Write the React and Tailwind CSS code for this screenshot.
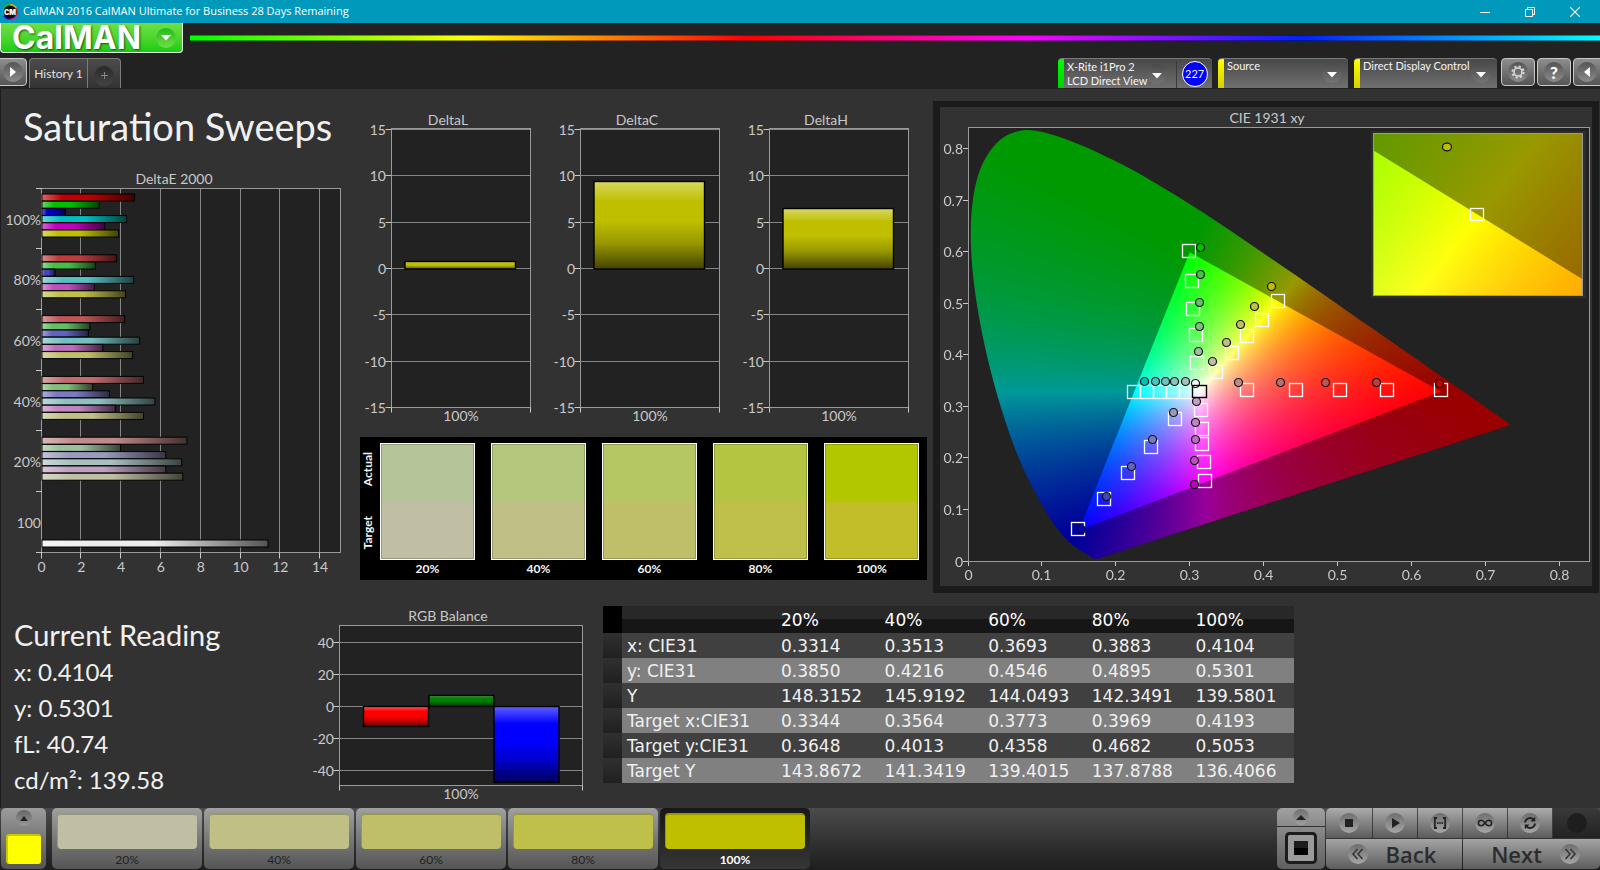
import { useLayoutEffect, useRef } from "react";

const TEXT = "#c9c9c9";
const GRID = "#858585";
const LINE = "#9a9a9a";

const PALETTE = {
  red: ["#bf0000", "#bf3c3c", "#bf5555", "#bf6c6c", "#bf8a8a"],
  green: ["#00bf00", "#46bf46", "#63bf63", "#7fbf7f", "#9dbf9d"],
  blue: ["#0000bf", "#4444bf", "#6262bf", "#7a7abf", "#9a9abf"],
  cyan: ["#00bfbf", "#56bfbf", "#74bfbf", "#90bfbf", "#a8bfbf"],
  magenta: ["#bf00bf", "#bf4fbf", "#bf6bbf", "#bf86bf", "#bfa0bf"],
  yellow: ["#bfbf00", "#bfbf4b", "#bfbf69", "#bfbf86", "#bfbfa5"],
};
const HUES = ["red", "green", "blue", "cyan", "magenta", "yellow"];

const LEVELS = ["20%", "40%", "60%", "80%", "100%"];

/* ---------- Delta E 2000 ---------- */

const DELTA_E = [
  { label: "100%", values: [4.65, 2.88, 1.17, 4.25, 3.15, 3.85] },
  { label: "80%", values: [3.75, 2.68, 0.65, 4.6, 2.63, 4.2] },
  { label: "60%", values: [4.15, 2.41, 2.33, 4.9, 3.05, 4.55] },
  { label: "40%", values: [5.1, 2.55, 3.39, 5.67, 3.68, 5.1] },
  { label: "20%", values: [7.28, 3.95, 6.22, 7.02, 6.22, 7.07] },
];

function DeltaEChart() {
  const x0 = 41.5;
  const top = 18.5;
  const bottom = 382.5;
  const unit = 19.9;
  const band = (bottom - top) / 6;
  return (
    <svg viewBox="0 0 345 410" width="345" height="410" role="img" aria-label="DeltaE 2000" fontSize="14" fill={TEXT}>
      <defs>
        <linearGradient id="shine-h">
          <stop offset="0" stopColor="#fff" stopOpacity=".4" />
          <stop offset=".22" stopColor="#fff" stopOpacity="0" />
          <stop offset=".5" stopColor="#000" stopOpacity="0" />
          <stop offset="1" stopColor="#000" stopOpacity=".65" />
        </linearGradient>
      </defs>
      <text x="174" y="14" textAnchor="middle">DeltaE 2000</text>
      <rect x={x0} y={top} width="299" height={bottom - top} fill="#222" />
      {[2, 4, 6, 8, 10, 12, 14].map((t) => (
        <path key={t} d={`M${Math.round(x0 + t * unit) - 0.5} ${top}V${bottom}`} stroke={GRID} />
      ))}
      <rect x={x0} y={top} width="299" height={bottom - top} fill="none" stroke={LINE} />
      {[0, 2, 4, 6, 8, 10, 12, 14].map((t) => (
        <g key={t}>
          <path d={`M${Math.round(x0 + t * unit) - 0.5} ${bottom}v6`} stroke={TEXT} />
          <text x={x0 + t * unit} y="402" textAnchor="middle">{t}</text>
        </g>
      ))}
      {[0, 1, 2, 3, 4, 5, 6].map((i) => (
        <path key={i} d={`M36 ${Math.round(top + i * band) - 0.5}h6`} stroke={TEXT} />
      ))}
      {DELTA_E.map((row, r) => (
        <g key={row.label}>
          <text x="41" y={top + r * band + 36} textAnchor="end">{row.label}</text>
          {row.values.map((v, i) => (
            <g key={i}>
              <rect x="42" y={24 + r * 60.8 + i * 7.2} width={v * unit} height="7" fill={PALETTE[HUES[i]][r]} />
              <rect x="42" y={24 + r * 60.8 + i * 7.2} width={v * unit} height="7" fill="url(#shine-h)" stroke="#000" />
            </g>
          ))}
        </g>
      ))}
      <text x="41" y="358" textAnchor="end">100</text>
      <rect x="42" y="370" width="226" height="7" fill="#eee" />
      <rect x="42" y="370" width="226" height="7" fill="url(#shine-h)" stroke="#000" />
    </svg>
  );
}

/* ---------- vertical bar charts ---------- */

function BarChart({ id, title, width, height, plot, ticks, yOf, bars, labelX, titleX }) {
  const { x, y, w, h } = plot;
  return (
    <svg viewBox={`0 0 ${width} ${height}`} width={width} height={height} role="img" aria-label={title} fontSize="14" fill={TEXT}>
      <defs>
        <linearGradient id={`shine-${id}`} x1="0" y1="0" x2="0" y2="1">
          <stop offset="0" stopColor="#fff" stopOpacity=".38" />
          <stop offset=".23" stopColor="#fff" stopOpacity="0" />
          <stop offset=".45" stopColor="#000" stopOpacity="0" />
          <stop offset=".7" stopColor="#000" stopOpacity=".2" />
          <stop offset="1" stopColor="#000" stopOpacity=".65" />
        </linearGradient>
      </defs>
      <text x={titleX} y="13" textAnchor="middle">{title}</text>
      <rect x={x} y={y} width={w} height={h} fill="#222" />
      {ticks.map((t) => (
        <g key={t}>
          <path d={`M${x} ${yOf(t)}h${w}`} stroke={GRID} />
          <path d={`M${x - 6} ${yOf(t)}h6`} stroke={TEXT} />
          <text x={labelX} y={yOf(t) + 5} textAnchor="end">{t}</text>
        </g>
      ))}
      <rect x={x} y={y} width={w} height={h} fill="none" stroke={LINE} />
      <path d={`M${x} ${y + h}v5M${x + w} ${y + h}v5`} stroke={TEXT} />
      {bars.map((b) => (
        <g key={b.x}>
          <rect x={b.x} y={b.y} width={b.w} height={b.h} fill={b.fill} />
          <rect x={b.x} y={b.y} width={b.w} height={b.h} fill={`url(#shine-${id})`} stroke="#000" strokeWidth="1.4" />
        </g>
      ))}
      <text x={x + w / 2} y={y + h + 13} textAnchor="middle">100%</text>
    </svg>
  );
}

const DELTAS = [
  { title: "DeltaL", top: 149.5 },
  { title: "DeltaC", top: 69.5 },
  { title: "DeltaH", top: 96.5 },
];

function DeltaCharts() {
  return (
    <div className="flex gap-4">
      {DELTAS.map((d) => (
        <BarChart
          key={d.title}
          id={d.title}
          title={d.title}
          width={173}
          height={316}
          titleX={85}
          labelX={23}
          plot={{ x: 28.5, y: 16.5, w: 139, h: 279 }}
          ticks={[15, 10, 5, 0, -5, -10, -15]}
          yOf={(t) => (t === -15 ? 295.5 : Math.round(157 - t * 9.27) - 0.5)}
          bars={[{ x: 42, y: d.top, w: 110.5, h: 157 - d.top, fill: "#bfbf00" }]}
        />
      ))}
    </div>
  );
}

function RgbBalance() {
  return (
    <BarChart
      id="rgb"
      title="RGB Balance"
      width={290}
      height={200}
      titleX={148}
      labelX={34}
      plot={{ x: 39.5, y: 17.5, w: 243, h: 160 }}
      ticks={[40, 20, 0, -20, -40]}
      yOf={(t) => Math.round(98 - t * 1.59) + 0.5}
      bars={[
        { x: 63.5, y: 98.5, w: 65, h: 20, fill: "#ff0000" },
        { x: 129, y: 87.5, w: 65, h: 11, fill: "#008000" },
        { x: 194, y: 98.5, w: 65, h: 76, fill: "#0000ff" },
      ]}
    />
  );
}

/* ---------- swatches ---------- */

const SWATCHES = [
  ["20%", "bg-[#b5c599]", "bg-[#c0bfa4]"],
  ["40%", "bg-[#b4c77d]", "bg-[#c0bf85]"],
  ["60%", "bg-[#b4c762]", "bg-[#bfbf69]"],
  ["80%", "bg-[#b3c541]", "bg-[#bfc049]"],
  ["100%", "bg-[#b3c700]", "bg-[#c1be2a]"],
];

function SwatchPanel() {
  return (
    <div className="flex h-[143px] w-[567px] bg-black pt-[6px] text-[12px] font-bold text-[#f4f4f4]">
      <div className="flex w-5 flex-col pr-1">
        <div className="flex h-[52px] items-center justify-center [writing-mode:vertical-rl]">
          <span className="rotate-180">Actual</span>
        </div>
        <div className="mt-3 flex h-[52px] items-center justify-center [writing-mode:vertical-rl]">
          <span className="rotate-180">Target</span>
        </div>
      </div>
      <div className="flex gap-4">
        {SWATCHES.map(([label, actual, target]) => (
          <div key={label} className="w-[95px]">
            <div className="h-[117px] border border-white">
              <div className={`h-1/2 border-x border-t border-black/20 ${actual}`} />
              <div className={`h-1/2 border-x border-b border-black/20 ${target}`} />
            </div>
            <div className="text-center leading-[18px]">{label}</div>
          </div>
        ))}
      </div>
    </div>
  );
}

/* ---------- CIE 1931 ---------- */

const LOCUS = [
  [0.1741, 0.005], [0.1733, 0.0048], [0.1714, 0.0051], [0.1689, 0.0069], [0.1644, 0.0109],
  [0.1566, 0.0177], [0.144, 0.0297], [0.1355, 0.0399], [0.1241, 0.0578], [0.1096, 0.0868],
  [0.0913, 0.1327], [0.0687, 0.2007], [0.0454, 0.295], [0.0235, 0.4127], [0.0082, 0.5384],
  [0.0039, 0.6548], [0.0139, 0.7502], [0.0389, 0.812], [0.0743, 0.8365], [0.1142, 0.8282],
  [0.1547, 0.8069], [0.1929, 0.7816], [0.2296, 0.7543], [0.3016, 0.6923], [0.3731, 0.6245],
  [0.4441, 0.5547], [0.5125, 0.4866], [0.5752, 0.4242], [0.627, 0.3725], [0.6658, 0.334],
  [0.6915, 0.3083], [0.719, 0.2809], [0.7347, 0.2653],
];
const GAMUT = [[0.3, 0.6], [0.64, 0.33], [0.15, 0.06]];

const TARGETS = {
  green: [[0.2986, 0.602], [0.302, 0.544], [0.304, 0.49], [0.3072, 0.44], [0.309, 0.386]],
  yellow: [[0.4193, 0.5053], [0.3965, 0.4682], [0.3773, 0.4368], [0.3564, 0.4053], [0.3344, 0.3668]],
  cyan: [[0.2238, 0.3298], [0.2418, 0.3298], [0.2594, 0.3298], [0.2765, 0.3298], [0.2946, 0.3298]],
  blue: [[0.1484, 0.0627], [0.1836, 0.1209], [0.2161, 0.1726], [0.2472, 0.2231], [0.2788, 0.2774]],
  magenta: [[0.3194, 0.1558], [0.3185, 0.194], [0.3162, 0.2289], [0.3162, 0.2573], [0.3149, 0.2942]],
  red: [[0.6397, 0.3324], [0.5666, 0.3324], [0.503, 0.3324], [0.4434, 0.3324], [0.3762, 0.3324]],
};
const ACTUALS = {
  green: [[0.3144, 0.6092], [0.3144, 0.5555], [0.3131, 0.5018], [0.3131, 0.4553], [0.3117, 0.4067]],
  yellow: [[0.4104, 0.5321], [0.3883, 0.4935], [0.3693, 0.4586], [0.3493, 0.4236], [0.3304, 0.388]],
  cyan: [[0.2387, 0.3486], [0.2535, 0.3486], [0.2671, 0.3486], [0.2793, 0.3486], [0.2941, 0.3486]],
  blue: [[0.1539, 0.0607], [0.1872, 0.1254], [0.2211, 0.1836], [0.2495, 0.2367], [0.2779, 0.2878]],
  magenta: [[0.3063, 0.1487], [0.3063, 0.1959], [0.3077, 0.2367], [0.3077, 0.269], [0.309, 0.3091]],
  red: [[0.6387, 0.344], [0.5521, 0.346], [0.484, 0.346], [0.4222, 0.346], [0.3654, 0.346]],
};

function chromaToRgb(x, y, gain) {
  const yy = Math.max(y, 0.0001);
  const X = x / yy;
  const Z = (1 - x - yy) / yy;
  const r = Math.max(0, 3.2406 * X - 1.5372 - 0.4986 * Z);
  const g = Math.max(0, -0.9689 * X + 1.8758 + 0.0415 * Z);
  const b = Math.max(0, 0.0557 * X - 0.204 + 1.057 * Z);
  const k = (255 * gain) / Math.max(r, g, b, 1e-6);
  return [r * k, g * k, b * k];
}

function chromaLayer(w, h, view, gain) {
  const c = document.createElement("canvas");
  c.width = w;
  c.height = h;
  const ctx = c.getContext("2d");
  const img = ctx.createImageData(w, h);
  for (let j = 0; j < h; j++) {
    for (let i = 0; i < w; i++) {
      const rgb = chromaToRgb(view.x + (i + 0.5) / view.sx, view.y - (j + 0.5) / view.sy, gain);
      const k = (j * w + i) * 4;
      img.data[k] = rgb[0];
      img.data[k + 1] = rgb[1];
      img.data[k + 2] = rgb[2];
      img.data[k + 3] = 255;
    }
  }
  ctx.putImageData(img, 0, 0);
  return c;
}

function ChromaCanvas({ w, h, view, label }) {
  const ref = useRef(null);
  useLayoutEffect(() => {
    const ctx = ref.current.getContext("2d");
    ctx.clearRect(0, 0, w, h);
    const px = ([x, y]) => [(x - view.x) * view.sx, (view.y - y) * view.sy];

    ctx.save();
    ctx.beginPath();
    const p = LOCUS.map(px);
    ctx.moveTo(...p[0]);
    for (let i = 0; i < p.length - 1; i++) {
      const a = p[Math.max(i - 1, 0)];
      const b = p[i];
      const c = p[i + 1];
      const d = p[Math.min(i + 2, p.length - 1)];
      ctx.bezierCurveTo(
        b[0] + (c[0] - a[0]) / 6, b[1] + (c[1] - a[1]) / 6,
        c[0] - (d[0] - b[0]) / 6, c[1] - (d[1] - b[1]) / 6,
        c[0], c[1],
      );
    }
    ctx.closePath();
    ctx.clip();
    ctx.drawImage(chromaLayer(w, h, view, 0.6), 0, 0);
    ctx.restore();

    ctx.save();
    ctx.beginPath();
    GAMUT.map(px).forEach((q) => ctx.lineTo(...q));
    ctx.closePath();
    ctx.clip();
    ctx.drawImage(chromaLayer(w, h, view, 1), 0, 0);
    ctx.restore();
  }, [w, h, view]);
  return <canvas ref={ref} width={w} height={h} aria-label={label} className="block" />;
}

const MAIN_VIEW = { x: 0, y: 0.8411, sx: 739, sy: 515.4 };
const INSET_VIEW = { x: 0.3893, y: 0.5353, sx: 3483, sy: 2700 };

function CieChart() {
  const X = (x) => 28.5 + x * 739;
  const Y = (y) => 454.5 - y * 515.4;
  const snap = (v) => Math.round(v) - 0.5;
  return (
    <svg viewBox="0 0 652 479" className="block w-full" role="img" aria-label="CIE 1931 xy" fontSize="14" fill={TEXT}>
      <text x="327" y="16" textAnchor="middle">CIE 1931 xy</text>
      <rect x="28.5" y="20.5" width="621" height="434" fill="#222" />
      <foreignObject x="28" y="21" width="621" height="434">
        <ChromaCanvas w={621} h={434} view={MAIN_VIEW} label="Chromaticity diagram" />
      </foreignObject>
      <rect x="28.5" y="20.5" width="621" height="434" fill="none" stroke={LINE} />
      {[0, 1, 2, 3, 4, 5, 6, 7, 8].map((t) => {
        const gx = snap(X(t / 10));
        const gy = snap(Y(t / 10));
        return (
          <g key={t}>
            <path d={`M${gx} 455v4M23 ${gy}h5`} stroke={TEXT} />
            <text x={gx} y="473" textAnchor="middle">{t / 10}</text>
            <text x="23" y={gy + 5} textAnchor="end">{t / 10}</text>
          </g>
        );
      })}
      {Object.entries(TARGETS).flatMap(([hue, pts]) =>
        pts.map(([x, y]) => (
          <rect key={hue + x + y} x={snap(X(x)) - 6} y={snap(Y(y)) - 6} width="13" height="13" fill="none" stroke="#fff" strokeWidth="1.3" />
        )),
      )}
      {Object.entries(ACTUALS).flatMap(([hue, pts]) =>
        pts.map(([x, y], i) => (
          <circle key={hue + x + y} cx={snap(X(x))} cy={snap(Y(y))} r="4" fill={PALETTE[hue][i]} stroke="#111" strokeWidth="1.2" />
        )),
      )}
      <circle cx={snap(X(0.3072))} cy={snap(Y(0.3453))} r="4" fill="#fff" stroke="#111" strokeWidth="1.2" />
      <rect x={snap(X(0.3127)) - 7} y={snap(Y(0.3298)) - 6} width="14" height="12" fill="none" stroke="#000" strokeWidth="1.4" />

      <rect x="431" y="24" width="215" height="167" fill="#2d2d2d" />
      <foreignObject x="434" y="27" width="209" height="162">
        <ChromaCanvas w={209} h={162} view={INSET_VIEW} label="Zoomed target" />
      </foreignObject>
      <rect x="433.5" y="26.5" width="209" height="162" fill="none" stroke={LINE} />
      <ellipse cx="507" cy="40" rx="4.5" ry="3.8" fill="#bfbf00" stroke="#111" strokeWidth="1.2" />
      <rect x="530.5" y="101.5" width="13" height="12" fill="none" stroke="#fff" strokeWidth="1.3" />
    </svg>
  );
}

/* ---------- readings and table ---------- */

const READINGS = ["x: 0.4104", "y: 0.5301", "fL: 40.74", "cd/m²: 139.58"];

const ROWS = [
  ["x: CIE31", "0.3314", "0.3513", "0.3693", "0.3883", "0.4104"],
  ["y: CIE31", "0.3850", "0.4216", "0.4546", "0.4895", "0.5301"],
  ["Y", "148.3152", "145.9192", "144.0493", "142.3491", "139.5801"],
  ["Target x:CIE31", "0.3344", "0.3564", "0.3773", "0.3969", "0.4193"],
  ["Target y:CIE31", "0.3648", "0.4013", "0.4358", "0.4682", "0.5053"],
  ["Target Y", "143.8672", "141.3419", "139.4015", "137.8788", "136.4066"],
];

function ReadingsTable() {
  return (
    <table className="w-[691px] table-fixed border-collapse text-left font-['DejaVu_Sans',sans-serif] text-[17px] leading-6 text-[#f0f0f0]">
      <colgroup>
        <col className="w-[19px]" />
        <col className="w-[154px]" />
        {LEVELS.map((l) => <col key={l} />)}
      </colgroup>
      <thead>
        <tr className="h-[27px]">
          <td className="bg-black p-0" />
          <td className="bg-linear-to-b from-[#282828] from-50% to-[#161616] to-50% p-0" />
          {LEVELS.map((l) => (
            <th key={l} scope="col" className="bg-linear-to-b from-[#282828] from-50% to-[#161616] to-50% p-0 pl-[5px] font-normal text-white">
              {l}
            </th>
          ))}
        </tr>
      </thead>
      <tbody>
        {ROWS.map((row, i) => (
          <tr key={row[0]} className={`h-[25px] ${i % 2 ? "bg-[#808080]" : "bg-[#404040]"}`}>
            <td className="bg-linear-to-b from-[#303030] to-[#202020] p-0" />
            <th scope="row" className="whitespace-nowrap p-0 pl-[5px] font-normal">{row[0]}</th>
            {row.slice(1).map((v, j) => (
              <td key={j} className="p-0 pl-[5px]">{v}</td>
            ))}
          </tr>
        ))}
      </tbody>
    </table>
  );
}

/* ---------- chrome ---------- */

function TitleBar() {
  return (
    <header className="flex h-[23px] items-center bg-[#0099bc] px-[2px] font-['Open_Sans','Noto_Sans',sans-serif] text-[11px] text-white">
      <svg width="16" height="16" viewBox="0 0 16 16" aria-hidden="true">
        <path d="M8 8L8 0A8 8 0 0 1 15 4z" fill="#e8b000" />
        <path d="M8 8L15 4A8 8 0 0 1 15 12z" fill="#e02020" />
        <path d="M8 8L15 12A8 8 0 0 1 8 16z" fill="#d010c0" />
        <path d="M8 8L8 16A8 8 0 0 1 1 12z" fill="#2020e0" />
        <path d="M8 8L1 12A8 8 0 0 1 1 4z" fill="#00b0e0" />
        <path d="M8 8L1 4A8 8 0 0 1 8 0z" fill="#20c020" />
        <circle cx="8" cy="8" r="6.6" fill="#0a0a0a" />
        <text x="8" y="10.6" fontSize="7" fontWeight="900" fill="#fff" textAnchor="middle" fontFamily="Inter, sans-serif">CM</text>
      </svg>
      <span className="ml-[5px] flex-1">CalMAN 2016 CalMAN Ultimate for Business 28 Days Remaining</span>
      <div className="flex h-full">
        <button aria-label="Minimize" className="grid w-[45px] place-items-center">
          <svg width="10" height="10"><path d="M0 5.5h10" stroke="#fff" /></svg>
        </button>
        <button aria-label="Restore" className="grid w-[45px] place-items-center">
          <svg width="10" height="10" fill="none" stroke="#fff"><path d="M.5 2.5h7v7h-7zM2.5 2.5v-2h7v7h-2" /></svg>
        </button>
        <button aria-label="Close" className="grid w-[46px] place-items-center">
          <svg width="10" height="10" stroke="#fff" strokeWidth="1.1"><path d="M0 0l10 10M10 0L0 10" /></svg>
        </button>
      </div>
    </header>
  );
}

function Caret() {
  return (
    <span className="grid size-5 shrink-0 place-items-center rounded-full bg-linear-to-b from-[#4a4a4a] to-[#747474]">
      <svg width="10" height="6" className="mt-1"><path d="M0 0h10L5 5.5z" fill="#fff" /></svg>
    </span>
  );
}

const DEVICE = "flex h-[30px] overflow-hidden rounded-t-[4px] border-t border-[#7a7a7a] bg-linear-to-b from-[#484848] to-[#707070] text-left text-[11px] leading-[14px] text-[#f4f4f4]";
const SQUARE = "grid h-[28px] w-[34px] place-items-center rounded-[4px] border border-[#c8c8c8] bg-linear-to-b from-[#8e8e8e] to-[#555]";
const DISC = "grid size-5 place-items-center rounded-full bg-linear-to-b from-[#555] to-[#8c8c8c]";

function Toolbar() {
  return (
    <div className="flex h-[30px] items-start">
      <button aria-label="Expand panel" className="-ml-px grid h-[28px] w-[28px] place-items-center rounded-r-[4px] border border-[#c8c8c8] bg-linear-to-b from-[#8e8e8e] to-[#555]">
        <span className={DISC}>
          <svg width="6" height="10"><path d="M0 0l6 5-6 5z" fill="#fff" /></svg>
        </span>
      </button>
      <div className="ml-[2px] flex h-[30px] rounded-t-[4px] border border-b-0 border-[#7c7c7c] bg-linear-to-b from-[#4c4c4c] to-[#333]">
        <button className="w-[58px] border-r border-[#7c7c7c] text-[12px] text-[#e4e4e4]">History 1</button>
        <button aria-label="Add history" className="grid w-[32px] place-items-center pt-1">
          <span className="grid size-5 place-items-center rounded-full bg-linear-to-b from-[#2a2a2a] to-[#454545]">
            <svg width="7" height="7" stroke="#888"><path d="M3.5 0v7M0 3.5h7" /></svg>
          </span>
        </button>
      </div>
      <div className="ml-auto flex items-start">
        <div className={`${DEVICE} w-[154px]`}>
          <span className="w-[6px] shrink-0 bg-linear-to-b from-[#00ff00] to-[#00d000]" />
          <button className="flex flex-1 items-center justify-between pl-[3px] pr-[9px] text-left">
            <span className="whitespace-nowrap">X-Rite i1Pro 2<br />LCD Direct View</span>
            <Caret />
          </button>
          <span className="mt-[2px] w-px bg-[#3a3a3a]" />
          <div className="grid w-[36px] place-items-center">
            <span className="grid size-[26px] place-items-center rounded-full border border-white bg-[#0000ff]">227</span>
          </div>
        </div>
        <button className={`${DEVICE} ml-[6px] w-[130px]`}>
          <span className="h-full w-[6px] shrink-0 bg-linear-to-b from-[#ffff00] to-[#d4d000]" />
          <span className="flex-1 pl-[3px]">Source</span>
          <span className="mr-[6px] mt-1"><Caret /></span>
        </button>
        <button className={`${DEVICE} ml-[6px] w-[143px]`}>
          <span className="h-full w-[6px] shrink-0 bg-linear-to-b from-[#ffff00] to-[#d4d000]" />
          <span className="flex-1 whitespace-nowrap pl-[3px]">Direct Display Control</span>
          <span className="mr-[6px] mt-1"><Caret /></span>
        </button>
        <button aria-label="Settings" className={`${SQUARE} ml-1`}>
          <span className={DISC}>
            <svg width="14" height="14" viewBox="0 0 14 14">
              <circle cx="7" cy="7" r="4" fill="none" stroke="#d8d8d8" strokeWidth="1.6" />
              <circle cx="7" cy="7" r="5.6" fill="none" stroke="#d8d8d8" strokeWidth="2" strokeDasharray="2.2 2.2" />
            </svg>
          </span>
        </button>
        <button aria-label="Help" className={`${SQUARE} ml-[2px]`}>
          <span className={`${DISC} text-[17px] font-black leading-none text-white`}>?</span>
        </button>
        <button aria-label="Collapse panel" className="-mr-px ml-[2px] grid h-[28px] w-[28px] place-items-center rounded-l-[4px] border border-[#c8c8c8] bg-linear-to-b from-[#8e8e8e] to-[#555]">
          <span className={DISC}>
            <svg width="6" height="10"><path d="M6 0L0 5l6 5z" fill="#fff" /></svg>
          </span>
        </button>
      </div>
    </div>
  );
}

const PATCHES = [
  ["20%", "bg-[#c0bfa4]"],
  ["40%", "bg-[#c0bf85]"],
  ["60%", "bg-[#bfbf69]"],
  ["80%", "bg-[#bfc049]"],
  ["100%", "bg-[#bfbf00]"],
];

const ROUND = "grid size-5 place-items-center rounded-full bg-linear-to-b from-[#6e6e6e] to-[#a6a6a6]";
const KEY = "grid w-[44px] place-items-center bg-linear-to-b from-[#acacac] to-[#5c5c5c] first:w-[46px]";

const TRANSPORT = [
  ["Stop", <rect key="s" x="4" y="4" width="8" height="8" fill="#222" />],
  ["Play", <path key="p" d="M5 3l8 5-8 5z" fill="#222" />],
  ["Series", (
    <g key="r" fill="none" stroke="#222" strokeWidth="1.8">
      <path d="M5 3H2.8v10H5M11 3h2.2v10H11" />
      <path d="M5 8h6" strokeDasharray="1.4 .9" />
    </g>
  )],
  ["Loop", <path key="l" d="M8 8C6.5 5.8 5.4 5.2 4.2 5.2a2.8 2.8 0 0 0 0 5.6C5.4 10.8 6.5 10.2 8 8s2.6-2.8 3.800-2.800a2.800 2.800 0 0 1 0 5.600C10.600 10.800 9.500 10.200 8 8z" fill="none" stroke="#222" strokeWidth="1.6" />],
  ["Refresh", (
    <g key="f" fill="none" stroke="#222" strokeWidth="2">
      <path d="M3 7.5A5 5 0 0 1 11.5 4.500M13 8.500A5 5 0 0 1 4.500 11.500" />
      <path d="M13.200 1.800v4.700H8.500zM2.800 14.200V9.500h4.700z" fill="#222" stroke="none" />
    </g>
  )],
];

function Footer() {
  return (
    <footer className="flex h-[62px] items-start bg-linear-to-b from-[#4b4b4b] to-[#1e1e1e] pl-px">
      <div className="flex h-[61px] w-[45px] flex-col items-center rounded-[5px] bg-linear-to-b from-[#9c9c9c] to-[#555] pt-[2px]">
        <button aria-label="Open palette" className="grid size-4 place-items-center rounded-full bg-linear-to-b from-[#666] to-[#999]">
          <svg width="8" height="5"><path d="M0 5h8L4 0z" fill="#222" /></svg>
        </button>
        <button aria-label="Current colour" className="mt-2 h-[30px] w-[35px] rounded-[3px] border-l-2 border-t-2 border-[#c8c800] bg-[#ffff00]" />
      </div>
      <div className="ml-[6px] flex gap-[2px]">
        {PATCHES.map(([label, color]) => {
          const active = label === "100%";
          return (
            <button
              key={label}
              aria-pressed={active}
              className={`flex h-[61px] w-[150px] flex-col items-center rounded-[5px] pt-[5px] text-[12px] leading-[17px] ${
                active
                  ? "bg-linear-to-b from-[#181818] to-[#363636] font-bold text-white"
                  : "bg-linear-to-b from-[#a0a0a0] to-[#555] text-[#222]"
              }`}
            >
              <span className={`h-[36px] w-[140px] rounded-[4px] border-l border-t-2 border-black/20 ${color}`} />
              <span className="mt-[2px]">{label}</span>
            </button>
          );
        })}
      </div>
      <div className="ml-auto flex gap-px">
        <div className="flex h-[61px] w-[48px] flex-col overflow-hidden rounded-[5px] bg-[#333]">
          <button aria-label="Open pattern list" className="grid h-[18px] place-items-center bg-linear-to-b from-[#a0a0a0] to-[#8a8a8a]">
            <span className="grid size-4 place-items-center rounded-full bg-linear-to-b from-[#707070] to-[#a0a0a0]">
              <svg width="10" height="5"><path d="M0 5h10L5 0z" fill="#222" /></svg>
            </span>
          </button>
          <button aria-label="Pattern window" className="mt-px grid flex-1 place-items-center bg-linear-to-b from-[#8a8a8a] to-[#606060]">
            <svg width="32" height="32">
              <rect x="1.5" y="1.5" width="29" height="29" rx="3" fill="#9a9a9a" stroke="#1c1c1c" strokeWidth="3" />
              <rect x="9" y="9" width="14" height="14" fill="#1d1d1d" />
              <rect x="9" y="16" width="14" height="7" fill="#000" />
            </svg>
          </button>
        </div>
        <div className="flex flex-col gap-px overflow-hidden rounded-[5px]">
          <div className="flex h-[30px] gap-px">
            {TRANSPORT.map(([name, icon]) => (
              <button key={name} aria-label={name} className={KEY}>
                <span className={ROUND}><svg width="16" height="16" viewBox="0 0 16 16">{icon}</svg></span>
              </button>
            ))}
            <button aria-label="Record" disabled className="grid w-[47px] place-items-center bg-linear-to-b from-[#3a3a3a] to-[#222]">
              <span className="size-5 rounded-full bg-[#1e1e1e]" />
            </button>
          </div>
          <div className="flex h-[30px] gap-px font-['Open_Sans','Noto_Sans',sans-serif] text-[22px] font-semibold leading-none text-[#2c2c2c]">
            <button className="flex w-[136px] items-center justify-center gap-[18px] bg-linear-to-b from-[#a4a4a4] to-[#5e5e5e] pr-1">
              <span className={ROUND}>
                <svg width="12" height="12" fill="none" stroke="#333" strokeWidth="1.5"><path d="M5.5 1L1 6l4.500 5M10.500 1L6 6l4.500 5" /></svg>
              </span>
              Back
            </button>
            <button className="flex flex-1 items-center justify-center gap-[18px] bg-linear-to-b from-[#a4a4a4] to-[#5e5e5e] pl-2">
              Next
              <span className={ROUND}>
                <svg width="12" height="12" fill="none" stroke="#333" strokeWidth="1.5"><path d="M1.5 1L6 6l-4.500 5M6.500 1L11 6l-4.500 5" /></svg>
              </span>
            </button>
          </div>
        </div>
      </div>
    </footer>
  );
}

export default function App() {
  return (
    <div className="flex min-h-screen flex-col bg-[#222] font-['Lato',sans-serif] text-[#f0f0f0]">
      <TitleBar />
      <div className="flex h-[35px] items-start">
        <button className="flex h-[30px] w-[183px] items-center justify-between rounded-b-[4px] border border-t-0 border-[#e8ffe8] bg-linear-to-b from-[#6ee044] to-[#10cc10] pl-[11px] pr-[6px] font-['Inter',sans-serif] text-[32px] font-bold leading-none text-white">
          <span className="[text-shadow:1px_1px_2px_rgba(0,0,0,0.6)]">CalMAN</span>
          <span className="grid size-5 place-items-center rounded-full bg-linear-to-b from-[#1fb81f] to-[#6ee044]">
            <svg width="10" height="6"><path d="M0 0h10L5 5.5z" fill="#fff" /></svg>
          </span>
        </button>
        <div className="ml-[7px] mt-3 h-[6px] flex-1 border-y border-black/40 bg-[linear-gradient(to_right,#00ff00,#ffff00,#ff0000,#ff00ff,#0022ff_79%,#00ffff)]" />
      </div>
      <Toolbar />
      <main className="mt-px flex flex-1 flex-col border-l border-[#1c1c1c] bg-[#323232]">
        <div className="flex">
          <section className="w-[354px] shrink-0">
            <h1 className="ml-[22px] mt-4 whitespace-nowrap text-[38px] leading-[42px]">Saturation Sweeps</h1>
            <div className="mt-[23px] -ml-px"><DeltaEChart /></div>
          </section>
          <section className="w-[575px] shrink-0 pt-[23px]">
            <div className="pl-2"><DeltaCharts /></div>
            <div className="mt-[9px] pl-[5px]"><SwatchPanel /></div>
          </section>
          <section className="ml-[3px] mr-px mt-3 flex-1 self-start border-[7px] border-t-[6px] border-[#1b1b1b] bg-[#323232]">
            <CieChart />
          </section>
        </div>
        <div className="flex pt-[13px]">
          <section className="w-[299px] pl-[13px] pt-[10px] text-[24px] leading-[36px]">
            <h2 className="text-[29px] leading-[38px]">Current Reading</h2>
            {READINGS.map((r) => <p key={r}>{r}</p>)}
          </section>
          <div className="pt-[2px]"><RgbBalance /></div>
          <div className="ml-[13px]"><ReadingsTable /></div>
        </div>
      </main>
      <Footer />
    </div>
  );
}
